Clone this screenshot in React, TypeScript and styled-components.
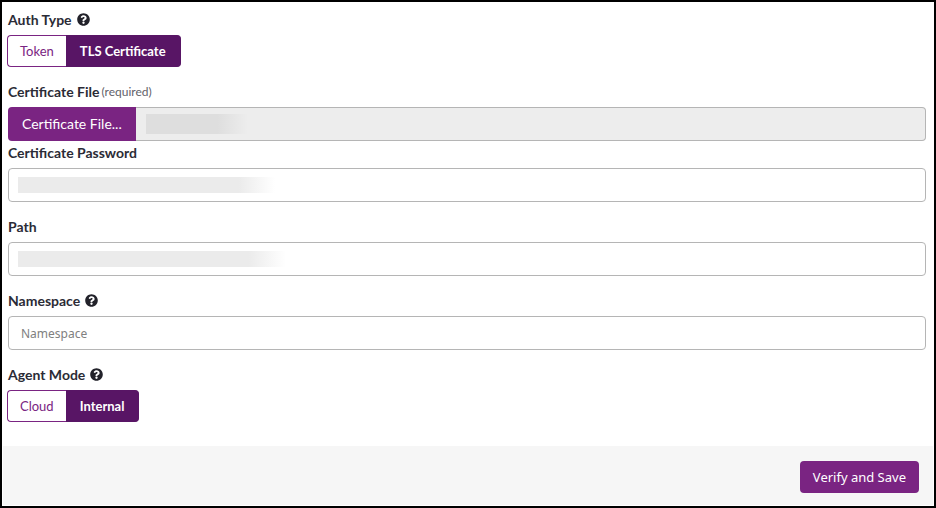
import React, { useState } from "react";
import styled, { createGlobalStyle, css } from "styled-components";
import { FaQuestionCircle } from "react-icons/fa";

const GlobalStyle = createGlobalStyle`
  *, *::before, *::after { box-sizing: border-box; }
  body { margin: 0; background: #fff; }
  button, input { font: inherit; }
`;

const colors = {
  text: "#2b2b36",
  muted: "#62626a",
  brand: "#7a2482",
  brandDark: "#581565",
  border: "#b5b5b5",
};

const Page = styled.div`
  display: flex;
  flex-direction: column;
  min-height: 100vh;
  border: 2px solid #000;
  background: #fff;
  color: ${colors.text};
  font-family: Lato, "Liberation Sans", sans-serif;
  font-size: 14px;
  line-height: 20px;
`;

const Form = styled.form`
  display: flex;
  flex-direction: column;
  flex: 1;
`;

const Fields = styled.div`
  display: flex;
  flex-direction: column;
  flex: 1;
  padding: 8px 8px 22px 6px;
`;

const Field = styled.div<{ $tight?: boolean }>`
  display: flex;
  flex-direction: column;
  gap: 5px;
  margin-bottom: ${(p) => (p.$tight ? 2 : 15)}px;

  &:last-child { margin-bottom: 0; }
`;

const labelStyle = css`
  display: flex;
  align-items: center;
  font-weight: 700;
`;

const Label = styled.label`${labelStyle}`;
const GroupLabel = styled.div`${labelStyle}`;

const Required = styled.span`
  margin-left: 2px;
  color: ${colors.muted};
  font-size: 12px;
  font-weight: 400;
`;

const HelpIcon = styled(FaQuestionCircle)`
  width: 13px;
  height: 13px;
  margin-left: 5px;
  margin-bottom: 2px;
  color: #22222a;
`;

const Segments = styled.div`
  display: flex;
  margin-left: -1px;
`;

const Segment = styled.button<{ $active: boolean }>`
  height: 32px;
  padding: 0 ${(p) => (p.$active ? 14 : 12)}px;
  border: 1px solid ${(p) => (p.$active ? colors.brandDark : colors.brand)};
  background: ${(p) => (p.$active ? colors.brandDark : "#fff")};
  color: ${(p) => (p.$active ? "#fff" : colors.brand)};
  font-size: 13px;
  font-weight: ${(p) => (p.$active ? 700 : 400)};
  cursor: pointer;

  &:first-child { border-radius: 4px 0 0 4px; border-right: 0; }
  &:last-child { border-radius: 0 4px 4px 0; border-left: 0; }
`;

const TextInput = styled.input<{ $mask?: number }>`
  width: 100%;
  height: 34px;
  padding: 0 12px;
  border: 1px solid ${colors.border};
  border-radius: 4px;
  background-color: #fff;
  color: ${colors.text};
  font-family: "Noto Sans", sans-serif;
  font-size: 12px;
  ${(p) =>
    p.$mask &&
    css`
      background-image: linear-gradient(90deg, #ebebeb 0%, #ebebeb 86%, #fff 100%);
      background-repeat: no-repeat;
      background-position: 9px 8px;
      background-size: ${p.$mask}px 16px;
    `}

  &::placeholder { color: #808080; opacity: 1; }
`;

const FileRow = styled.div`
  display: flex;
`;

const FileButton = styled.button`
  flex: none;
  height: 34px;
  padding: 0 14px;
  border: 0;
  border-radius: 4px 0 0 4px;
  background: ${colors.brand};
  color: #fff;
  cursor: pointer;
`;

const FileName = styled(TextInput)`
  flex: 1;
  min-width: 0;
  border-left: 0;
  border-radius: 0 4px 4px 0;
  background-color: #ededed;
  background-image: linear-gradient(90deg, #dedede 0%, #dedede 70%, #ededed 100%);
  background-repeat: no-repeat;
  background-position: 10px 6px;
  background-size: 102px 20px;
`;

const Footer = styled.footer`
  display: flex;
  justify-content: flex-end;
  margin: 0 1px 1px;
  padding: 15px 14px 12px;
  background: #f6f6f6;
`;

const SaveButton = styled.button`
  height: 32px;
  padding: 0 13px;
  border: 0;
  border-radius: 4px;
  background: ${colors.brand};
  color: #fff;
  font-family: "Noto Sans", sans-serif;
  font-size: 13px;
  cursor: pointer;
`;

interface ChoiceProps {
  id: string;
  label: string;
  options: string[];
  initial: string;
}

function Choice({ id, label, options, initial }: ChoiceProps) {
  const [value, setValue] = useState(initial);
  return (
    <Field>
      <GroupLabel id={id}>
        {label}
        <HelpIcon aria-hidden />
      </GroupLabel>
      <Segments role="group" aria-labelledby={id}>
        {options.map((option) => (
          <Segment
            key={option}
            type="button"
            $active={option === value}
            aria-pressed={option === value}
            onClick={() => setValue(option)}
          >
            {option}
          </Segment>
        ))}
      </Segments>
    </Field>
  );
}

export default function App() {
  return (
    <>
      <GlobalStyle />
      <Page>
        <Form onSubmit={(e) => e.preventDefault()}>
          <Fields>
            <Choice id="auth-type" label="Auth Type" options={["Token", "TLS Certificate"]} initial="TLS Certificate" />
            <Field $tight>
              <Label htmlFor="certificate-file">
                Certificate File<Required>(required)</Required>
              </Label>
              <FileRow>
                <FileButton type="button">Certificate File...</FileButton>
                <FileName id="certificate-file" readOnly />
              </FileRow>
            </Field>
            <Field>
              <Label htmlFor="certificate-password">Certificate Password</Label>
              <TextInput id="certificate-password" type="password" $mask={257} />
            </Field>
            <Field>
              <Label htmlFor="path">Path</Label>
              <TextInput id="path" $mask={268} />
            </Field>
            <Field>
              <Label htmlFor="namespace">
                Namespace
                <HelpIcon aria-hidden />
              </Label>
              <TextInput id="namespace" placeholder="Namespace" />
            </Field>
            <Choice id="agent-mode" label="Agent Mode" options={["Cloud", "Internal"]} initial="Internal" />
          </Fields>
          <Footer>
            <SaveButton type="submit">Verify and Save</SaveButton>
          </Footer>
        </Form>
      </Page>
    </>
  );
}
